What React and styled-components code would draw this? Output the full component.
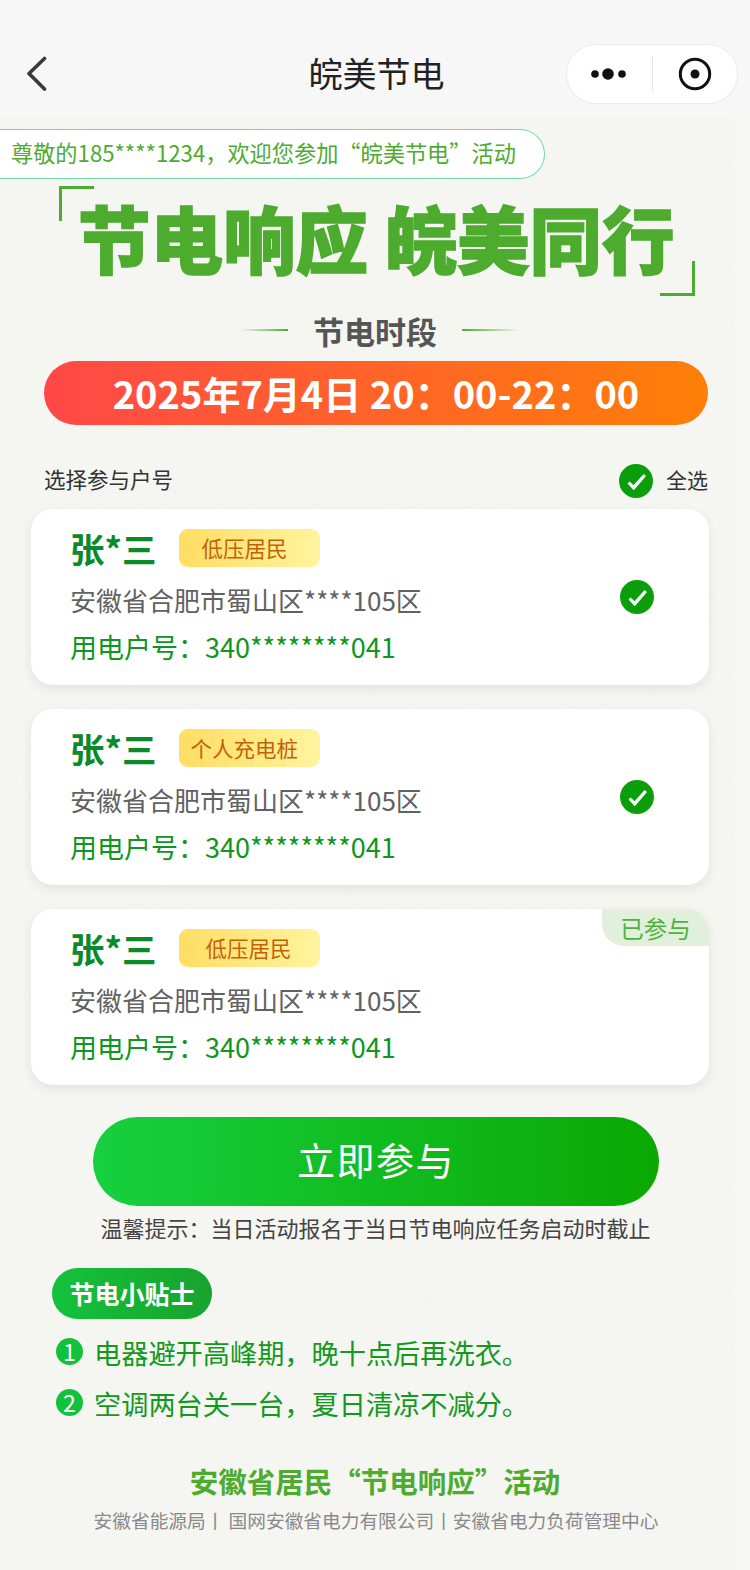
import React from 'react'
import styled, { createGlobalStyle } from 'styled-components'

const GlobalStyle = createGlobalStyle`
  html, body {
    margin: 0;
    padding: 0;
    background: #f7f7f5;
    font-family: "Noto Sans CJK SC", "Liberation Sans", sans-serif;
  }
  * { box-sizing: border-box; }
`

const Page = styled.div`
  position: relative;
  width: 750px;
  height: 1570px;
  overflow: hidden;
  background: #f7f7f5;
`

const Paper = styled.svg`
  position: absolute;
  left: 0;
  top: 116px;
  width: 734px;
  height: 1454px;
`

const Content = styled.div`
  position: relative;
`

const NavBar = styled.header`
  display: flex;
  align-items: center;
  justify-content: space-between;
  height: 116px;
  padding: 32px 12px 0 26px;
  background: #f7f7f7;
  position: relative;
`

const NavTitle = styled.div`
  position: absolute;
  left: 3px;
  right: 0;
  top: 48px;
  text-align: center;
  font-size: 34px;
  line-height: 50px;
  color: #222;
`

const Capsule = styled.div`
  display: flex;
  align-items: center;
  width: 172px;
  height: 60px;
  border-radius: 30px;
  background: #fff;
  border: 1px solid #ebebeb;
`

const CapsuleCell = styled.div`
  flex: 1;
  display: flex;
  align-items: center;
  justify-content: center;
`

const CapsuleDivider = styled.div`
  width: 1px;
  height: 34px;
  background: #e4e4e4;
`

const Banner = styled.div`
  width: 545px;
  height: 50px;
  margin-top: 13px;
  padding-left: 11px;
  border: 1px solid #6cdba6;
  border-left: none;
  border-radius: 0 25px 25px 0;
  background: #fff;
  color: #4dab2e;
  font-size: 22.2px;
  line-height: 45px;
  white-space: nowrap;
`

const Slogan = styled.div`
  position: relative;
  height: 110px;
  margin: 7px 0 0 59px;
  width: 636px;
  padding: 8px 0 0 19px;
  color: #4dab2e;
  font-size: 72.5px;
  font-weight: 900;
  line-height: 86px;
  white-space: nowrap;
  -webkit-text-stroke: 1.5px #4dab2e;
`

const Corner = styled.i`
  position: absolute;
  width: 35px;
  height: 35px;
  border: 0 solid #4dab2e;
  ${p => (p.$end
    ? 'right: 0; bottom: 0; border-width: 0 3px 3px 0;'
    : 'left: 0; top: 0; border-width: 3px 0 0 3px;')}
`

const SectionHead = styled.div`
  display: flex;
  align-items: center;
  justify-content: center;
  gap: 25px;
  height: 46px;
  margin-top: 11px;
  color: #555;
  font-size: 31px;
  font-weight: 700;
`

const HeadLine = styled.span`
  width: ${p => (p.$flip ? 58 : 48)}px;
  height: 2px;
  margin-right: ${p => (p.$flip ? -10 : 0)}px;
  background: linear-gradient(${p => (p.$flip ? '270deg' : '90deg')}, rgba(77, 171, 46, 0), #4dab2e);
`

const TimePill = styled.div`
  width: 664px;
  height: 64px;
  margin: 8px 0 0 44px;
  border-radius: 32px;
  background: linear-gradient(90deg, #ff4848, #ff7f08);
  color: #fff;
  font-size: 38px;
  font-weight: 700;
  line-height: 64px;
  text-align: center;
  white-space: pre;
`

const SelectRow = styled.div`
  display: flex;
  align-items: center;
  justify-content: space-between;
  width: 664px;
  height: 36px;
  margin: 37px 0 0 44px;
  color: #333;
  font-size: 21.5px;
  line-height: 32px;
`

const SelectLabel = styled.span`
  margin-bottom: 3px;
`

const SelectAll = styled.div`
  display: flex;
  align-items: center;
  gap: 13px;
  font-size: 21px;
`

const CardList = styled.div`
  display: flex;
  flex-direction: column;
  gap: 24px;
  width: 678px;
  margin: 11px 0 0 31px;
`

const Card = styled.section`
  position: relative;
  display: flex;
  align-items: center;
  justify-content: space-between;
  height: 176px;
  padding: 0 55px 0 39px;
  border-radius: 22px;
  background: #fff;
  box-shadow: 0 4px 12px rgba(0, 0, 0, 0.08);
`

const CardBody = styled.div`
  display: flex;
  flex-direction: column;
  margin-top: 8px;
`

const NameRow = styled.div`
  display: flex;
  align-items: center;
  gap: 22px;
  height: 42px;
  margin-top: -6px;
`

const Name = styled.div`
  color: #0a8a28;
  font-size: 34.5px;
  font-weight: 700;
`

const Tag = styled.div`
  width: 141px;
  height: 38px;
  border-radius: 9px;
  background: linear-gradient(90deg, #ffdd63, #fff49d);
  color: #c3620c;
  font-size: 21.5px;
  line-height: 38px;
  padding-left: ${p => p.$pad}px;
  white-space: nowrap;
`

const Address = styled.div`
  margin-top: 9px;
  color: #616161;
  font-size: 26px;
  line-height: 44px;
`

const Account = styled.div`
  margin-top: 3px;
  color: #0e9620;
  font-size: 27px;
  line-height: 44px;
`

const Joined = styled.div`
  position: absolute;
  right: 0;
  top: 0;
  width: 107px;
  height: 37px;
  border-radius: 0 22px 0 22px;
  background: #e1f0dc;
  color: #4fb23a;
  font-size: 23.5px;
  line-height: 39px;
  text-align: center;
`

const JoinButton = styled.button`
  display: block;
  width: 566px;
  height: 89px;
  margin: 32px 0 0 93px;
  padding: 0 0 7px;
  border: none;
  border-radius: 45px;
  background: linear-gradient(90deg, #17d03f, #0aa802);
  color: #fff;
  font-family: inherit;
  font-size: 38px;
  letter-spacing: 1.5px;
`

const Hint = styled.div`
  margin-top: 3px;
  padding-left: 1px;
  color: #444;
  font-size: 22px;
  line-height: 36px;
  text-align: center;
`

const TipsPill = styled.div`
  width: 160px;
  height: 51px;
  margin: 23px 0 0 52px;
  border-radius: 26px;
  background: linear-gradient(90deg, #13c23c, #18a32e);
  color: #fff;
  font-size: 25px;
  font-weight: 700;
  line-height: 50px;
  text-align: center;
`

const TipList = styled.div`
  display: flex;
  flex-direction: column;
  gap: 11px;
  margin: 13px 0 0 56px;
`

const Tip = styled.div`
  display: flex;
  align-items: center;
  gap: 11px;
  height: 40px;
  color: #12991e;
  font-size: 27.2px;
`

const TipNo = styled.span`
  width: 27px;
  height: 27px;
  margin-top: -1px;
  border-radius: 50%;
  background: #13c23c;
  color: #fff;
  font-size: 23px;
  line-height: 27px;
  text-align: center;
`

const FooterTitle = styled.div`
  margin-top: 36px;
  color: #4dab2e;
  font-size: 28.5px;
  font-weight: 700;
  line-height: 44px;
  text-align: center;
`

const FooterOrg = styled.div`
  margin-top: 2px;
  padding-left: 2px;
  color: #8a8a8a;
  font-size: 18.7px;
  line-height: 30px;
  text-align: center;
  white-space: pre;
`

const CheckIcon = styled.svg`
  flex: none;
  margin-top: ${p => p.$shift || 0}px;
`

const Check = ({ shift }) => (
  <CheckIcon $shift={shift} width="34" height="34" viewBox="0 0 34 34">
    <circle cx="17" cy="17" r="17" fill="#0a9f0a" />
    <path d="M8.5 19.5l2.2-1.9 3.8 3.6L24.6 10l2.4 2-12.2 14.2z" fill="#fff" />
  </CheckIcon>
)

const accounts = [
  { tag: '低压居民', pad: 23, checked: true },
  { tag: '个人充电桩', pad: 12, checked: true },
  { tag: '低压居民', pad: 27, joined: true }
]

export default function App() {
  return (
    <Page>
      <GlobalStyle />
      <Paper aria-hidden="true">
        <filter id="paper">
          <feTurbulence type="fractalNoise" baseFrequency="0.05 0.5" numOctaves="3" seed="4" />
          <feColorMatrix values="0 0 0 0 0.6  0 0 0 0 0.6  0 0 0 0 0.55  0 0 0 0.05 0" />
        </filter>
        <rect width="734" height="1454" fill="#f6f6f3" />
        <rect width="734" height="1454" filter="url(#paper)" />
      </Paper>
      <Content>
        <NavBar>
          <svg width="22" height="36" viewBox="0 0 22 36">
            <path d="M18.5 2.5L3 17.5l15.5 15.5" fill="none" stroke="#3a3a3a" strokeWidth="3.6" strokeLinecap="round" strokeLinejoin="round" />
          </svg>
          <NavTitle>皖美节电</NavTitle>
          <Capsule>
            <CapsuleCell>
              <svg width="36" height="14" viewBox="0 0 36 14">
                <circle cx="4" cy="7" r="3.8" fill="#111" />
                <circle cx="17" cy="7" r="5.8" fill="#111" />
                <circle cx="31" cy="7" r="3.8" fill="#111" />
              </svg>
            </CapsuleCell>
            <CapsuleDivider />
            <CapsuleCell>
              <svg width="34" height="34" viewBox="0 0 34 34">
                <circle cx="17" cy="17" r="14.7" fill="none" stroke="#111" strokeWidth="3" />
                <circle cx="17" cy="17" r="4.5" fill="#111" />
              </svg>
            </CapsuleCell>
          </Capsule>
        </NavBar>

        <Banner>尊敬的185****1234，欢迎您参加“皖美节电”活动</Banner>

        <Slogan>
          <Corner />
          节电响应 皖美同行
          <Corner $end />
        </Slogan>

        <SectionHead>
          <HeadLine />
          节电时段
          <HeadLine $flip />
        </SectionHead>
        <TimePill>2025年7月4日 20：00-22：00</TimePill>

        <SelectRow>
          <SelectLabel>选择参与户号</SelectLabel>
          <SelectAll>
            <Check shift={1} />
            <SelectLabel>全选</SelectLabel>
          </SelectAll>
        </SelectRow>

        <CardList>
          {accounts.map((item, i) => (
            <Card key={i}>
              <CardBody>
                <NameRow>
                  <Name>张*三</Name>
                  <Tag $pad={item.pad}>{item.tag}</Tag>
                </NameRow>
                <Address>安徽省合肥市蜀山区****105区</Address>
                <Account>用电户号：340********041</Account>
              </CardBody>
              {item.checked && <Check />}
              {item.joined && <Joined>已参与</Joined>}
            </Card>
          ))}
        </CardList>

        <JoinButton>立即参与</JoinButton>
        <Hint>温馨提示：当日活动报名于当日节电响应任务启动时截止</Hint>

        <TipsPill>节电小贴士</TipsPill>
        <TipList>
          <Tip><TipNo>1</TipNo>电器避开高峰期，晚十点后再洗衣。</Tip>
          <Tip><TipNo>2</TipNo>空调两台关一台，夏日清凉不减分。</Tip>
        </TipList>

        <FooterTitle>安徽省居民“节电响应”活动</FooterTitle>
        <FooterOrg>安徽省能源局丨 国网安徽省电力有限公司丨安徽省电力负荷管理中心</FooterOrg>
      </Content>
    </Page>
  )
}
